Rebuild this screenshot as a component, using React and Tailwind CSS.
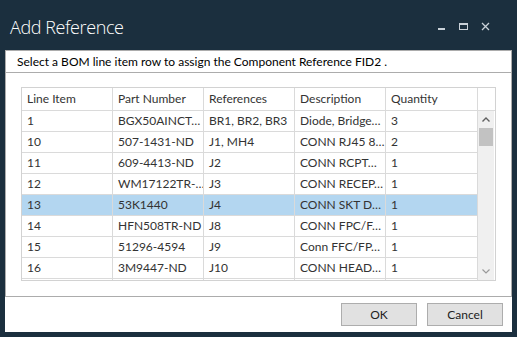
import React from "react";

const rows = [
  ["1", "BGX50AINCT…", "BR1, BR2, BR3", "Diode, Bridge…", "3"],
  ["10", "507-1431-ND", "J1, MH4", "CONN RJ45 8…", "2"],
  ["11", "609-4413-ND", "J2", "CONN RCPT…", "1"],
  ["12", "WM17122TR-…", "J3", "CONN RECEP…", "1"],
  ["13", "53K1440", "J4", "CONN SKT D…", "1"],
  ["14", "HFN508TR-ND", "J8", "CONN FPC/F…", "1"],
  ["15", "51296-4594", "J9", "Conn FFC/FP…", "1"],
  ["16", "3M9447-ND", "J10", "CONN HEAD…", "1"],
  ["", "", "", "", ""],
];

const headers = ["Line Item", "Part Number", "References", "Description", "Quantity"];
const widths = ["w-[91px]", "w-[91px]", "w-[91px]", "w-[91px]", "w-[92px]"];

function Cell({ text, w }) {
  return (
    <div className={`${w} shrink-0 h-full border-r border-[#dadada] pl-[5px] flex items-center overflow-hidden whitespace-nowrap`}>
      {text}
    </div>
  );
}

export default function App() {
  return (
    <div
      className="w-[517px] h-[337px] bg-[#1b2f3e] flex flex-col overflow-hidden"
      style={{ fontFamily: 'Lato, "Open Sans", sans-serif' }}
    >
      {/* title bar */}
      <div className="h-[50px] shrink-0 flex items-center justify-between pl-[10px] pr-[27px] pt-[3px]">
        <div
          className="text-[18px] font-light tracking-[-0.4px] text-white leading-none"
          style={{ fontFamily: '"Open Sans", sans-serif' }}
        >
          Add Reference
        </div>
        <div className="flex items-center gap-[12px] text-[#c9d1d8]">
          <svg width="9" height="9" viewBox="0 0 9 9">
            <rect x="1" y="6" width="7" height="2" fill="currentColor" />
          </svg>
          <svg width="11" height="9" viewBox="0 0 11 9">
            <rect x="1.5" y="1.5" width="8" height="6" fill="none" stroke="currentColor" strokeWidth="1" />
            <rect x="1" y="1" width="9" height="2" fill="currentColor" />
          </svg>
          <svg width="9" height="9" viewBox="0 0 9 9">
            <path d="M1 1 L8 8 M8 1 L1 8" stroke="currentColor" strokeWidth="1.3" />
          </svg>
        </div>
      </div>

      {/* dialog body */}
      <div className="mx-[5px] mb-[5px] flex-1 bg-white flex flex-col">
        <div className="border border-[#acacac] flex flex-col">
          <div className="h-[22px] border-b border-[#acacac] pl-[11px] flex items-center text-[12px] text-black">
            Select a BOM line item row to assign the Component Reference FID2 .
          </div>

          <div className="pt-[14px] pb-[15px] px-[15px]">
            <div className="border border-[#d2d2d2] text-[12px] text-[#333]">
              {/* header */}
              <div className="h-[23px] flex border-b border-[#dadada]">
                {headers.map((h, i) => (
                  <Cell key={h} text={h} w={widths[i]} />
                ))}
                <div className="w-[16px]" />
              </div>

              {/* body */}
              <div className="h-[169px] flex">
                <div className="w-[456px] overflow-hidden">
                  {rows.map((r, i) => (
                    <div
                      key={i}
                      className={`h-[21px] flex border-b border-[#dadada] ${i === 4 ? "bg-[#b3d6f0]" : ""}`}
                    >
                      {r.map((c, j) => (
                        <Cell key={j} text={c} w={widths[j]} />
                      ))}
                    </div>
                  ))}
                </div>

                {/* scrollbar */}
                <div className="w-[16px] bg-[#f0f0f0] flex flex-col">
                  <div className="h-[17px] flex items-center justify-center">
                    <svg width="8" height="5" viewBox="0 0 8 5">
                      <path d="M0.5 4.5 L4 1 L7.5 4.5" fill="none" stroke="#606060" strokeWidth="1.4" />
                    </svg>
                  </div>
                  <div className="h-[18px] mx-[1px] bg-[#c2c2c2]" />
                  <div className="flex-1" />
                  <div className="h-[17px] flex items-center justify-center">
                    <svg width="8" height="5" viewBox="0 0 8 5">
                      <path d="M0.5 0.5 L4 4 L7.5 0.5" fill="none" stroke="#9a9a9a" strokeWidth="1.2" />
                    </svg>
                  </div>
                </div>
              </div>
            </div>
          </div>
        </div>

        {/* buttons */}
        <div className="flex justify-end gap-[10px] pt-[6px] pr-[9px]">
          <button className="w-[76px] h-[23px] bg-[#e1e1e1] border border-[#adadad] text-[12px] text-[#222]">
            OK
          </button>
          <button className="w-[76px] h-[23px] bg-[#e1e1e1] border border-[#adadad] text-[12px] text-[#222]">
            Cancel
          </button>
        </div>
      </div>
    </div>
  );
}
